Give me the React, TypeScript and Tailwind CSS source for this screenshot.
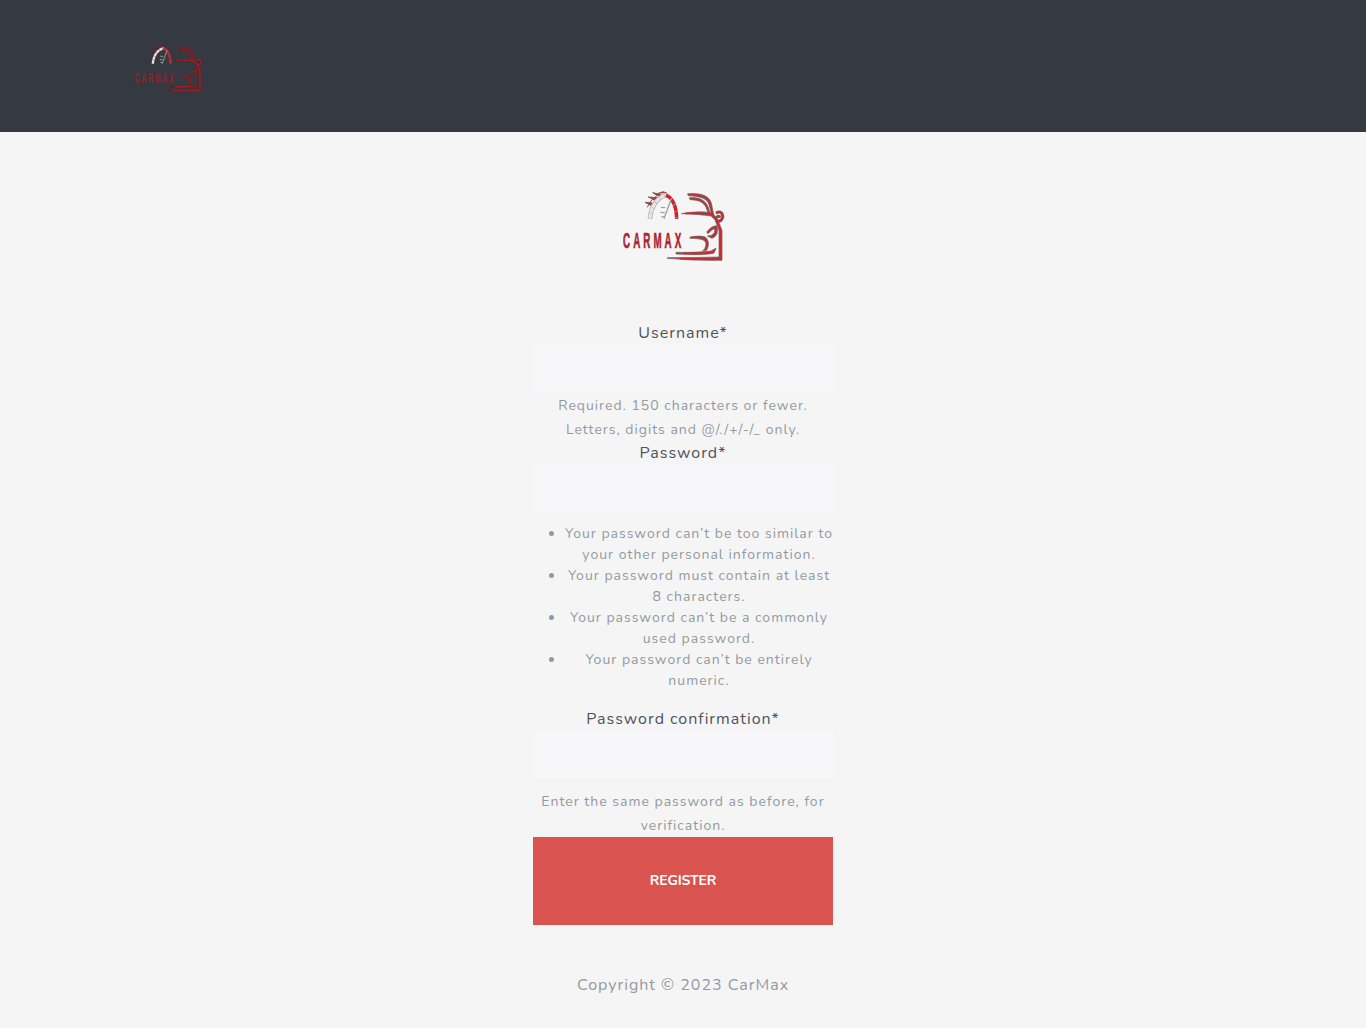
type LogoProps = { className: string; textClass: string; lineColor: string; shade: string; rim: string };

function Logo({ className, textClass, lineColor, shade, rim }: LogoProps) {
  return (
    <svg viewBox="0 0 390 270" className={className} fill="none" aria-label="CarMax">
      {/* gauge */}
      <path d="M105 67L128 69L122 76zM115 51L141 53L134 61zM128 38L152 43L146 49zM144 40L160 35L172 40" fill={lineColor} stroke={shade} strokeWidth="3" />
      <path d="M120 117C122 84 138 53 170 45" stroke={rim} strokeWidth="14" />
      <path d="M120 116C122 84 138 53 170 45" stroke="#e4e4e4" strokeWidth="10" strokeDasharray="16 1.5" />
      <path d="M112 82Q124 52 154 41" stroke={shade} strokeWidth="3" />
      <path d="M168 46C189 52 200 84 200 117" stroke={rim} strokeWidth="11" />
      <path d="M168 46C189 52 200 84 200 117" stroke="#d51f29" strokeWidth="10" strokeDasharray="18 2" />
      <path d="M184 56L162 116M153 82l13 1M151 97l13 1M154 110l11 1" stroke="#a0a0a0" strokeWidth="4" />
      {/* car outline */}
      <g stroke={shade} fill={shade} strokeLinejoin="round" strokeWidth="2">
        <path d="M233 41C270 38 297 46 304 69L312 108L305 106L297 74C291 54 270 49 234 47z" />
        <path d="M238 53C268 51 286 61 294 80L302 106L296 102L288 82C281 67 268 60 240 59z" />
        <path d="M214 101Q268 91 307 99L324 119L320 124L303 108Q268 103 214 101z" />
        <path d="M240 171Q282 164 290 175Q301 190 290 211L278 213L284 206Q292 190 283 182Q276 176 240 175z" />
        <path d="M290 156Q308 134 321 138Q328 167 306 175L292 168L305 166Q316 159 314 147Q308 145 294 161z" />
        <path d="M198 217Q260 218 303 213L318 204L312 219Q290 227 198 222z" />
        <path d="M172 233Q250 233 327 231V152L316 122L324 121L336 151V241Q250 243 172 235z" />
      </g>
      <path d="M318 98Q338 90 339 111Q334 128 321 123Q314 114 324 108L332 111" stroke={shade} strokeWidth="8" strokeLinejoin="round" />
      <g stroke={lineColor} strokeLinecap="round" strokeLinejoin="round">
        <path d="M242 44C270 42 293 50 301 69L308 107M248 56C268 55 285 66 291 82L298 102" strokeWidth="3" />
        <path d="M228 100Q270 97 306 104L321 122L332 151V236" strokeWidth="5" />
        <path d="M319 99Q336 93 337 111Q332 125 322 122" strokeWidth="5" />
        <path d="M294 157Q309 140 318 142Q321 164 304 171M249 172Q283 169 287 179Q296 190 287 208" strokeWidth="4" />
        <path d="M222 219Q263 222 308 217L314 210M212 236Q265 238 332 237" strokeWidth="5" />
      </g>
      <text x="39" y="204" textLength="184" lengthAdjust="spacingAndGlyphs" className={textClass}>
        CARMAX
      </text>
    </svg>
  );
}

const rules = [
  "Your password can’t be too similar to your other personal information.",
  "Your password must contain at least 8 characters.",
  "Your password can’t be a commonly used password.",
  "Your password can’t be entirely numeric.",
];

const label = "block h-6 text-center text-base leading-6 text-[#4e535c]";
const field = "block h-12 w-full bg-[#f7f7f9] px-3 outline-none";
const help = "pt-px text-center text-sm leading-6";

export default function App() {
  return (
    <div className="min-h-[1028px] bg-[#f5f5f5] font-['Nunito',sans-serif] tracking-[1px] text-[#929aa1]">
      <header className="flex h-[132px] items-start bg-[#353942] pt-[38px] pl-[126px]">
        <Logo
          className="h-[60px] w-[87px]"
          lineColor="#b51c24"
          shade="#5a2429"
          rim="#4c4649"
          textClass="fill-[#96202a] font-['Liberation_Sans'] text-[67px] font-bold tracking-[21px]"
        />
      </header>
      <main className="mx-auto flex w-[300px] flex-col pt-12">
        <Logo
          className="ml-[77px] h-[90px] w-[130px]"
          lineColor="#c92b32"
          shade="#805658"
          rim="#b5adad"
          textClass="fill-[#ad2432] stroke-[#ad2432] stroke-2 font-['Liberation_Sans'] text-[67px] font-bold tracking-[21px]"
        />
        <form className="pt-[51px]" onSubmit={(e) => e.preventDefault()}>
          <label htmlFor="username" className={label}>Username*</label>
          <input id="username" className={field} />
          <div className={help + " h-12"}>Required. 150 characters or fewer. Letters, digits and @/./+/-/_ only.</div>
          <label htmlFor="password" className={label}>Password*</label>
          <input id="password" type="password" className={field} />
          <ul className="mt-2.5 mb-4 text-center text-sm leading-[21px]">
            {rules.map((rule) => (
              <li key={rule} className="flex">
                <span className="mt-2 ml-4 h-[5px] w-[5px] shrink-0 rounded-full bg-[#929aa1]" />
                <div className="ml-[10px] w-[270px] shrink-0">{rule}</div>
              </li>
            ))}
          </ul>
          <label htmlFor="confirm" className={label}>Password confirmation*</label>
          <input id="confirm" type="password" className={field} />
          <div className={help + " mt-2.5 h-12"}>Enter the same password as before, for verification.</div>
          <button className="block h-[88px] w-full bg-[#d9534f] text-sm font-bold tracking-[-0.15px] text-white">REGISTER</button>
        </form>
      </main>
      <footer className="pt-12 text-center text-base leading-6">Copyright © 2023 CarMax</footer>
    </div>
  );
}
